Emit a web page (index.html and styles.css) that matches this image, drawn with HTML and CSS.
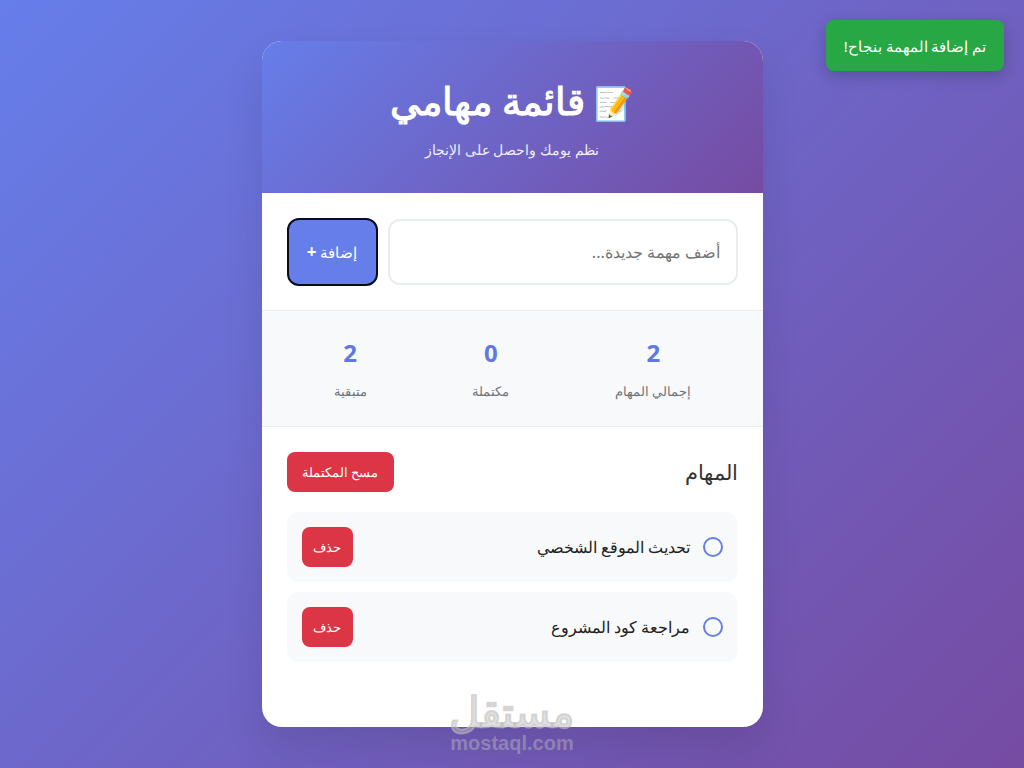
FILE: index.html
```html
<!DOCTYPE html>
<html lang="ar" dir="rtl">
<head>
<meta charset="utf-8">
<title>قائمة مهامي</title>
<link rel="stylesheet" href="styles.css">
</head>
<body>
<div class="toast">تم إضافة المهمة بنجاح!</div>
<main class="card">
  <header class="head">
    <h1><span class="emoji">📝</span> <span class="title">قائمة مهامي</span></h1>
    <p>نظم يومك واحصل على الإنجاز</p>
  </header>
  <section class="add">
    <input class="field" type="text" placeholder="أضف مهمة جديدة...">
    <button class="add-btn" type="button">إضافة <b class="plus">+</b></button>
  </section>
  <section class="stats">
    <div class="stat"><div class="num">2</div><div class="lab">إجمالي المهام</div></div>
    <div class="stat"><div class="num">0</div><div class="lab">مكتملة</div></div>
    <div class="stat"><div class="num">2</div><div class="lab">متبقية</div></div>
  </section>
  <section class="tasks">
    <div class="tasks-head">
      <h2>المهام</h2>
      <button class="danger clear" type="button">مسح المكتملة</button>
    </div>
    <div class="item">
      <span class="check"></span>
      <span class="txt">تحديث الموقع الشخصي</span>
      <button class="danger del" type="button">حذف</button>
    </div>
    <div class="item">
      <span class="check"></span>
      <span class="txt">مراجعة كود المشروع</span>
      <button class="danger del" type="button">حذف</button>
    </div>
  </section>
</main>
<div class="mark" dir="ltr">
  <span class="mark-ar" dir="rtl">مستقل</span>
  <span class="mark-en">mostaql.com</span>
</div>
</body>
</html>
```
FILE: styles.css
```css
* { box-sizing: border-box; margin: 0; padding: 0; }
html, body { height: 100%; }
body {
  font-family: "Noto Sans", "Open Sans", sans-serif;
  background: linear-gradient(135deg, #667eea 0%, #764ba2 100%);
  display: flex;
  align-items: center;
  justify-content: center;
  overflow: hidden;
}
.card {
  width: 501px;
  height: 686px;
  background: #fff;
  border-radius: 20px;
  box-shadow: 0 20px 40px rgba(0, 0, 0, .1);
  overflow: hidden;
}
.head {
  height: 152px;
  padding-top: 38px;
  text-align: center;
  color: #fff;
  background: linear-gradient(135deg, #667eea 0%, #764ba2 100%);
}
.head h1 { font-size: 32px; height: 48px; line-height: 48px; font-weight: 700; }
.title { font-size: 38px; line-height: 1; }
.head p { font-size: 13.5px; line-height: 21px; margin-top: 13px; opacity: .9; }
.add {
  height: 117px;
  padding: 25px;
  display: flex;
  gap: 10px;
  align-items: center;
}
.field {
  flex: 1;
  min-width: 0;
  height: 66px;
  border: 2px solid #e9ecef;
  border-radius: 12px;
  padding: 0 15px;
  font: 16.4px "Noto Sans", sans-serif;
  color: #333;
  outline: none;
}
.field::placeholder { color: #757575; }
.add-btn {
  width: 91px;
  height: 68px;
  background: #667eea;
  color: #fff;
  border: 2px solid #0b0b1e;
  border-radius: 12px;
  font: 14.5px "Noto Sans", sans-serif;
}
.plus { font-size: 17px; font-weight: 700; }
.stats {
  height: 117px;
  padding: 24px 71px 0 72px;
  background: #f8f9fa;
  border-top: 1px solid #e9ecef;
  border-bottom: 1px solid #e9ecef;
  display: flex;
  justify-content: space-between;
  text-align: center;
}
.num { font-family: "Open Sans", sans-serif; font-size: 24px; line-height: 36px; font-weight: 700; color: #5f78e2; }
.lab { font-size: 12.7px; line-height: 19px; color: #6c757d; margin-top: 11px; }
.tasks { padding: 25px; }
.tasks-head {
  display: flex;
  justify-content: space-between;
  align-items: center;
  height: 40px;
  margin-bottom: 20px;
}
.tasks-head h2 { font-size: 21px; line-height: 27px; font-weight: 400; color: #333; }
.danger {
  background: #dc3545;
  color: #fff;
  border: 0;
  border-radius: 8px;
  font: 13px "Noto Sans", sans-serif;
  height: 40px;
}
.clear { width: 107px; }
.del { width: 51px; }
.item {
  height: 70px;
  background: #f8f9fa;
  border-radius: 12px;
  padding: 0 15px;
  display: flex;
  align-items: center;
  gap: 12px;
  margin-bottom: 10px;
}
.check {
  width: 20px;
  height: 20px;
  flex: none;
  border: 2px solid #667eea;
  border-radius: 50%;
}
.txt { flex: 1; font-size: 16px; line-height: 24px; color: #222; }
.mark {
  position: absolute;
  left: 430px;
  top: 691px;
  width: 164px;
  display: flex;
  flex-direction: column;
  align-items: center;
  color: rgba(190, 190, 190, .45);
  font-family: "Liberation Sans", sans-serif;
  font-weight: 700;
  pointer-events: none;
}
.mark-ar { font-family: "Noto Sans", sans-serif; font-size: 42px; line-height: 40px; -webkit-text-stroke: 1px rgba(190, 190, 190, .45); }
.mark-en { font-size: 20px; line-height: 22px; margin-top: 1px; }
.toast {
  position: absolute;
  top: 20px;
  right: 20px;
  width: 178px;
  height: 51px;
  background: #28a745;
  color: #fff;
  border-radius: 8px;
  box-shadow: 0 5px 15px rgba(0, 0, 0, .2);
  display: flex;
  align-items: center;
  justify-content: center;
  font-size: 14.6px;
}
```
